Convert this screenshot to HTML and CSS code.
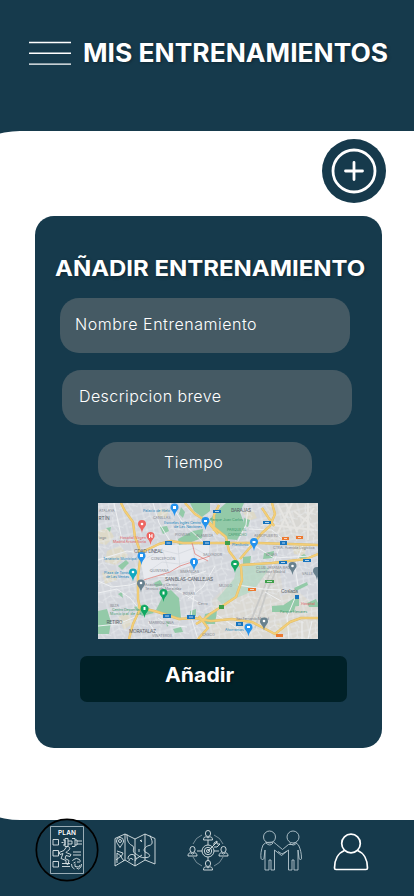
FILE: index.html
```html
<!DOCTYPE html>
<html lang="es">
<head>
<meta charset="utf-8">
<meta name="viewport" content="width=device-width, initial-scale=1">
<title>Mis entrenamientos</title>
<link rel="stylesheet" href="styles.css">
</head>
<body>
<div class="app">
  <header class="header">
    <svg class="menu" viewBox="0 0 42 25"><path d="M0 1.5h42M0 12.3h42M0 23.1h42"/></svg>
    <h1>MIS ENTRENAMIENTOS</h1>
  </header>
  <main class="content">
    <button class="add" aria-label="Nuevo"><svg viewBox="0 0 64 64"><circle cx="32" cy="32" r="21"/><path d="M32 23.5v17M23.5 32h17"/></svg></button>
    <section class="card">
      <h2>AÑADIR ENTRENAMIENTO</h2>
      <div class="field name"><span>Nombre Entrenamiento</span></div>
      <div class="field description"><span>Descripcion breve</span></div>
      <div class="field time"><span>Tiempo</span></div>
      <svg class="map" viewBox="0 0 220 136">
        <defs>
          <pattern id="streets" width="19" height="17" patternUnits="userSpaceOnUse" patternTransform="rotate(-14)">
            <path d="M0 4h19M3 0v17M0 11l9-3 10 5M11 0l-2 8 4 9M15 4v8M5 14h6" fill="none" stroke="#e9ecf0" stroke-width=".65"/>
          </pattern>
          <path id="pin" d="M0 5C-1-1-4-1-4-4A4 4 0 0 1 4-4C4-1 1-1 0 5Z"/>
        </defs>
        <rect width="220" height="136" fill="#d3d6dc"/>
        <path d="M171 0h49v38l-49-1-10-9ZM144 68l37-4 4 24-20 34-44-10-8-14Z" fill="#d8d7d3"/>
        <path d="M113 105l31-13 36 3 17-9 23 19v31H112Z" fill="#dbd9d3"/>
        <path d="M0 28l11-3 5 9-8 8-8-2ZM9 48l13-5 8 9-12 10-11-3ZM4 70l12-3 3 10-12 4ZM20 114l10-4 5 10-9 7ZM62 5l9 2-3 8-9-2ZM145 9l10-2 4 8-9 3ZM194 41l15 2-3 10-10-2ZM178 121l12-3 4 9-10 3Z" fill="#ddd9c8"/>
        <rect width="220" height="136" fill="url(#streets)"/>
        <path d="M42 53 61 42h50v15L79 67 46 76Z" fill="#e8eaef"/>
        <path d="M49 55l14-8 17 4 16-6 14 8M64 45l6 20M80 43l2 22M95 42l2 18M51 68l13-9 17 2 17-5" stroke="#d5d9e0" stroke-width=".8" fill="none"/>
        <g fill="#93caa8">
          <path d="M119 8 128 0h18l-4 9 5 14-8 14-10-1-13-12-4-8ZM92 0h20v8l-8 6-8-6ZM80 36l15-8 10-2-1 9-13 5-10 2ZM67 89l6-2 8 8 2 20-13-2-12-6ZM0 108l9-2 4 13-2 12H0ZM187 101l14-9v11l-19 2ZM174 103l24-2-2 8H174ZM107 111l12-3-2 13h-12ZM36 104l11-3 9 9-12 3Z"/>
          <path d="M20 63l8-6 3 3-7 7ZM62 24l7-1 2 5-6 3ZM146 15l6 2-2 7-5-2ZM166 50l10-2-1 7-10 1ZM196 85l13-6 1 3-12 6ZM209 100l9-4 2 4v4h-9ZM8 25l5-1-1 5ZM20 91l4-2 1 6ZM56 80l6-3 3 5-7 2ZM92 108l6-2v7l-6 1ZM75 126l8-2 2 5-8 1ZM145 54l8-1-1 7-7 1ZM83 4l4 5-2 6-4-4ZM201 54l5-3 4 3-6 4ZM68 118l4 2-3 4Z"/>
        </g>
        <path d="M139 62l26-1 6 5-16 22-31 13-5-5 17-20Z" fill="#b5d7c4" opacity=".8"/>
        <path d="M180 2l13 26M188 0l11 29M210 0v37M165 21l51 6M179 32 194 0M196 8l20 16M216 5l-17 22" stroke="#e6e5e2" stroke-width="2" fill="none"/>
        <path d="M172 70 166 85 150 125M177 70 169 88 157 125" stroke="#c8c9c8" stroke-width="1.800" fill="none"/>
        <g class="road minor">
          <path d="M0 78l14 6 18-2 27-9 29 2 20-7M55 0l6 20 11 18M72 0l13 20 21 20M16 0l8 37M0 57l29-9 18 3M0 90l19-4 13 9 10 12M66 69l9 16 25 14M90 96l15-12 12-21M90 65l7 19-4 30 7 22M150 4l-2 18-9 18M151 26l23 1 14 12M154 41l22 14 37-2M182 43l-11 29M205 42l-8 21 3 20M140 82l25 4 34 2M183 98l-16-9M191 136l-2-22 8-19M60 115l11 7 18 2M0 123l20-2 17-7M50 119l13 17M119 112l20 13 9 11M204 118v18M214 118l-4 18"/>
        </g>
        <g class="road casing"><path d="M23 0 27 8 35 19 37 34 41 45 42 58 40 73 40 96 42 106 35 121 31 136"/><path d="M42 50 61 41 73 38 85 40 128 40 160 40 192 41 220 42M110 18l8 8 10 8 3 14 12 16 1 13-6 17-12 8-14 9-7 6-7 4M116 28V12l5-10M87 0l10 11 13 8 10 12M40 104l20 5 21 7 15-1 17 3 21-2 20 3 23 12 15-12 11-4h30M143 62l31-2 34-4 12-5M142 56l14-16 8-10 8-7 5-12-3-11M164 5l12 18M101 113l9 12-10 11"/></g>
        <g class="road"><path d="M23 0 27 8 35 19 37 34 41 45 42 58 40 73 40 96 42 106 35 121 31 136"/><path d="M42 50 61 41 73 38 85 40 128 40 160 40 192 41 220 42M110 18l8 8 10 8 3 14 12 16 1 13-6 17-12 8-14 9-7 6-7 4M116 28V12l5-10M87 0l10 11 13 8 10 12M40 104l20 5 21 7 15-1 17 3 21-2 20 3 23 12 15-12 11-4h30M143 62l31-2 34-4 12-5M142 56l14-16 8-10 8-7 5-12-3-11M164 5l12 18M101 113l9 12-10 11"/></g>
        <path d="M46 77 72 69 82 63 112 53M94 40l3 11 13 7" fill="none" stroke="#df7770" stroke-width=".7"/>
        <g class="place">
          <text x=".5" y="16.500">RTÍN</text><text x="36" y="50" textLength="29">CDAD. LINEAL</text>
          <text x="67" y="78" textLength="48">SAN BLAS-CANILLEJAS</text><text x="8.500" y="121" textLength="16">RETIRO</text><text x="31" y="130" textLength="27">MORATALAZ</text><text x="133" y="9" textLength="20">BARAJAS</text><text x="183" y="90" textLength="17">Coslada</text>
        </g>
        <g class="label">
          <text x="1" y="9">ATALAYA</text><text x="55" y="16">CANILLAS</text><text x="77" y="33">PIOVERA</text><text x="98" y="34">ALAMEDA</text><text x="53" y="57">CONCEPCIÓN</text><text x="52" y="69">QUINTANA</text><text x="82" y="70">SIMANCAS</text><text x="85" y="92">ROSAS</text><text x="12" y="104">IBIZA</text><text x="51" y="121">MARROQUINA</text><text x="54" y="134">VINATEROS</text><text x="156" y="34">AEROPUERTO</text><text x="168" y="53">REJAS</text><text x="121" y="84">MUSEO</text><text x="100" y="102">Cerro</text><text x="1" y="36">iago</text><text x="105" y="53">SALVADOR</text><text x="104" y="133">CASCO</text><text x="204" y="72">VALLE</text>
          <text x="175" y="46">CTRA. Avenida Logística</text><text x="158" y="66">CLUB JARAMA RACE</text><text x="158" y="70">Carrefour Madrid</text><text x="138" y="117" textLength="33">San Fernando Madrid</text><text x="47" y="82.500">Academia y Centro</text><text x="47" y="86.500">Técnico de Moratalaz</text>
        </g>
        <g class="label green"><text x="112" y="18" textLength="33">Parque Juan Carlos</text><text x="129" y="28">PARQUE EL</text><text x="130" y="33">CAPRICHO</text><text x="14" y="108" textLength="28">Centro Deportivo</text><text x="12" y="112" textLength="31">Municipal de La</text><text x="182" y="110">Parque Henares</text></g>
        <g class="label blue"><text x="45" y="9" textLength="27">Palacio de Hielo</text><text x="66" y="21" textLength="37">Escuelas Ingles Centro</text><text x="76" y="25" textLength="28">de Las Naciones</text><text x="5" y="57" textLength="34">Tanatorio Municipal</text><text x="134" y="43">Plenilunio</text><text x="127" y="128">Ahorramas</text><text x="6" y="71" textLength="25">Plaza de Toros</text><text x="8" y="75" textLength="23">de Las Ventas</text></g>
        <g class="label red"><text x="22" y="36" textLength="26">Hospital Virgen</text><text x="15" y="40" textLength="33">Madrid Arturo Soria</text><text x="203" y="102">Hospital</text></g>
        <g class="shield"><path d="M67 38h7v4h-7ZM105 38h7v4h-7ZM182 38h7v4h-7ZM115 7h8v3h-8ZM165 18h8v3h-8ZM181 58h8v3h-8ZM205 56h8v3h-8ZM65 111h8v4h-8ZM89 112h8v4h-8ZM138 119h7v4h-7ZM197 92h4v4h-4Z" fill="#1874bd"/><path d="M184 34h7v3h-7ZM198 33h7v3h-7ZM150 85h8v3h-8ZM178 131h7v3h-7Z" fill="#ed792f"/><path d="M167 77h9v3h-9ZM127 38h5v4h-5ZM121 102h5v4h-5Z" fill="#3f9f4b"/><path d="M68.5 40h4M107 40h4M184 40h3M117 8.500h4M167 19.500h4M183 59.5h4M207 57.5h4M67 113h4M91 114h4M140 121h3M169 78.5h5M186 35.5h3M200 34.5h3M152 86.5h4" stroke="#fff" stroke-width=".7"/></g>
        <g fill="#ed6661"><use href="#pin" x="44" y="25"/><use href="#pin" x="52.500" y="37"/></g>
        <g fill="#2493ee"><use href="#pin" x="76.500" y="8.500"/><use href="#pin" x="107.500" y="22"/><use href="#pin" x="43.500" y="57"/><use href="#pin" x="96" y="63"/><use href="#pin" x="156" y="43"/><use href="#pin" x="150.500" y="128.500"/></g>
        <g fill="#10a862"><use href="#pin" x="137" y="65"/><use href="#pin" x="65.500" y="94"/><use href="#pin" x="46.500" y="110"/></g>
        <use href="#pin" x="35" y="73.500" fill="#10a9c0"/>
        <g fill="#68818e"><use href="#pin" x="43" y="84.500"/><use href="#pin" x="194.500" y="67"/><use href="#pin" x="219" y="72"/><use href="#pin" x="166" y="122.500"/></g>
        <g fill="#fff"><circle cx="44" cy="21" r="1.300"/><path d="M51 31h1v1.500h1.500V31h1v4h-1v-1.500H52V35h-1ZM75 3h3v3h-3ZM106 17h3v2h-3ZM42 51h3v3h-3ZM95 57h2v4h-2ZM154.500 38h3v2h-3ZM149 123h3v2h-3ZM135.500 60h3v2h-3ZM64.500 88.500h2v3h-2ZM45.500 104h2v3h-2Z"/><circle cx="35" cy="69" r="1.300"/><circle cx="43" cy="80" r="1.300"/><circle cx="194.500" cy="63" r="1.300"/><circle cx="166" cy="118" r="1.300"/></g>
      </svg>
      <button class="submit"><span>Añadir</span></button>
    </section>
  </main>
  <nav class="nav">
    <svg class="plan" viewBox="0 0 64 64"><circle cx="32" cy="32" r="30.700" fill="none" stroke="#000" stroke-width="1.700"/><path class="paper" d="M15.500 8.500h33v47h-33Z"/><text x="32" y="16.500" text-anchor="middle" textLength="18">PLAN</text><path d="M18 21.500h5.500V27H18ZM18 32.500h5.500V38H18ZM18 43.500h5.500V49H18ZM42 23h5M42 26h5M38 34h8M38 37h8M27 45.500h8M27 48.500h8"/><path d="M26.500 24.500h2M30 20.500h3v8h-3ZM28 22h2v5h-2M33 23h4v3h-4M37 20.500h3v8h-3M40 22h2v5h-2M31 29.500a2 2 0 1 1 2 3l-2 2 5 2-1 2-4-1-1 3 4 2-1 4-2-1v-3l-5-2 2-5-3 1-1-2 5-2ZM37.500 43l1-1.500a5 5 0 0 1 6 0l1 2M46.500 46a5 5 0 0 1-3 5l-2-1M39.500 51a5 5 0 0 1-3-5M38.500 45l2-1M45 44l-3 0M45 47l-1 2-4-.5v-3"/></svg>
    <svg class="route" viewBox="0 0 42 34"><path d="M1 5.500 11 1l10 5L31 1l10 4.500V31l-10-4-10 6-10-6L1 33ZM11 1v26M21 6v27M31 1v26M6 14.500C4 11 2.500 10 2.500 8a3.500 3.500 0 0 1 7 0c0 2-1.500 3-3.500 6.500ZM4.500 8a1.500 1.500 0 1 0 3 0 1.500 1.500 0 0 0-3 0M3 18l6 2-2 4 3 4M2 27l5-4-4-3v10M13 1.500c0 5 1 9 5 11s-1 5 3 8c4 2 5 5 12 4 5-1 2-4-1-5-4-2-1-6 3-7 5-1 3-5 1-10M26 8l2-1M26 7l2 2M14 26a4 4 0 1 1 7 2M15 28a2 2 0 1 1 4-1M25 16v3M22 26l6-4"/></svg>
    <svg class="goal" viewBox="0 0 42 42"><path class="ring" d="M15 6A16 16 0 0 0 6 15M27 6a16 16 0 0 1 9 9M6 28a16 16 0 0 0 9 9M27 37a16 16 0 0 0 9-9"/><circle cx="21" cy="22" r="6"/><circle cx="21" cy="22" r="3.700"/><circle cx="21" cy="22" r="1.500"/><path d="m21 22 9-9M27 16v-2l3-2v3l3 0-3 3h-3M21 11v5M21 28v4M10 22h5M27 22h5"/><g id="members"><path d="M18.500 4a2.500 2.500 0 1 1 5 0v1a2.500 2.500 0 0 1-5 0ZM16.500 11c0-4 3-3 3-3l1.500 1 1.500-1s3-1 3 3Z"/></g><use href="#members" x="-15.500" y="16"/><use href="#members" x="15.500" y="16"/><use href="#members" y="30"/></svg>
    <svg class="partners" viewBox="0 0 42 42"><circle cx="9.500" cy="7" r="6"/><circle cx="33" cy="7" r="6"/><path d="M6 12.500 3 15C1 20 .5 25 1 28c0 2 3 2 3 0l1-8v20h4V30h2v10h3.500V20l7 5.500 7-5.500v20H32V30h2v10h4V20l1 8c0 2 3 2 2.500 0 0-4-1-9-3-13l-3-2.500-3 2h-4l-6 5-6-5-3-2.500ZM6 13q4 4 7 0M29.500 13q4 4 7 0M18 21.500l4 2.500 5-3"/></svg>
    <svg class="profile" viewBox="0 0 36 38"><circle cx="18" cy="10.500" r="9.300"/><path d="M11.500 17.500C5 20 1.500 27 1.500 35q0 1.500 1.500 1.500h30q1.500 0 1.500-1.500c0-8-3.500-15-10-17.500"/></svg>
  </nav>
</div>
</body>
</html>
```
FILE: styles.css
```css
* { box-sizing: border-box; }
body { margin: 0; background: #163a4c; font-family: Inter, sans-serif; color: #fff; }
button { border: 0; padding: 0; color: inherit; font: inherit; }
svg { display: block; overflow: visible; flex: none; }
.app { width: 414px; height: 896px; overflow: hidden; display: flex; flex-direction: column; background: #163a4c; }
.header { height: 131px; flex: none; display: flex; align-items: flex-start; padding: 41px 0 0 29px; }
.menu { width: 42px; height: 25px; stroke: #fff; stroke-width: 1.4; }
h1, h2 { margin: 0; white-space: nowrap; font-weight: 700; text-shadow: 1px 1px 3px #0005; transform-origin: 0 50%; }
h1 { margin: -3px 0 0 11.500px; font-size: 25px; line-height: 30px; transform: scaleX(1.056); }
.content { width: 474px; height: 689px; flex: none; margin-left: -60px; padding: 8px 28px 0 95px; background: #fff; border-radius: 80px 0 0 80px; display: flex; flex-direction: column; }
.add { align-self: flex-end; width: 64px; height: 64px; border-radius: 50%; background: #163a4c; }
.add svg { width: 64px; height: 64px; fill: none; stroke: #fff; stroke-width: 2.8; stroke-linecap: round; }
.card { width: 347px; height: 531.500px; margin-top: 13px; background: #163a4c; border-radius: 19px; padding-top: 38px; }
h2 { width: max-content; margin-left: 19.500px; height: 44px; font-size: 22px; line-height: 29px; transform: scaleX(1.089); }
.field { width: 290px; height: 55px; background: #455a64; border-radius: 19px; font-size: 16px; font-weight: 300; line-height: 20px; padding: 15.500px 0 0 15px; white-space: nowrap; }
.name { margin-left: 25px; letter-spacing: .52px; }
.description { margin: 17px 0 0 27px; padding-left: 17px; letter-spacing: .42px; }
.time { width: 214px; height: 45px; margin: 17px 0 0 63px; padding: 9.500px 0 0 66px; letter-spacing: .5px; }
.map { width: 220px; height: 136px; margin: 15.500px 0 0 63px; overflow: hidden; }
.road { fill: none; stroke: #f3ce77; stroke-width: 1.7; stroke-linejoin: round; }
.casing { stroke: #dfbd69; stroke-width: 2.4; }
.minor { stroke: #eef0f2; stroke-width: 1; }
.place { font-size: 4.8px; fill: #596168; }
.label { font-size: 3.6px; fill: #7d848c; }
.green { fill: #3f9a6e; }
.blue { fill: #2387bd; }
.red { fill: #df5c5c; }
.submit { display: block; width: 267px; height: 46px; margin: 17px 0 0 45px; padding: 0 0 7px 84.500px; text-align: left; background: #002128; border-radius: 7px; font-size: 19.500px; font-weight: 700; text-shadow: 1px 1px 2px #0008; }
.submit span { display: inline-block; transform: scaleX(1.09); transform-origin: 0 50%; }
.nav { height: 76px; position: relative; display: flex; align-items: flex-start; padding-left: 34.500px; }
.nav svg { fill: none; stroke: #dce5e8; stroke-width: .9; stroke-linejoin: round; }
.nav .plan { width: 64px; height: 64px; margin-top: -2px; }
.nav .paper { stroke: #a9bac2; }
.plan text { font: 600 6.5px Inter, sans-serif; fill: #fff; stroke: none; }
.nav .route { width: 42px; height: 34px; margin: 13px 0 0 15.500px; }
.nav .goal { width: 42px; height: 42px; margin: 8.500px 0 0 31px; }
.goal .ring { opacity: .55; }
.nav .partners { width: 42px; height: 42px; margin: 10px 0 0 30.500px; stroke: #b6c6ce; stroke-width: .9; }
.nav .profile { width: 36px; height: 38px; margin: 12.500px 0 0 31px; stroke: #fff; stroke-width: 1.7; }
```
